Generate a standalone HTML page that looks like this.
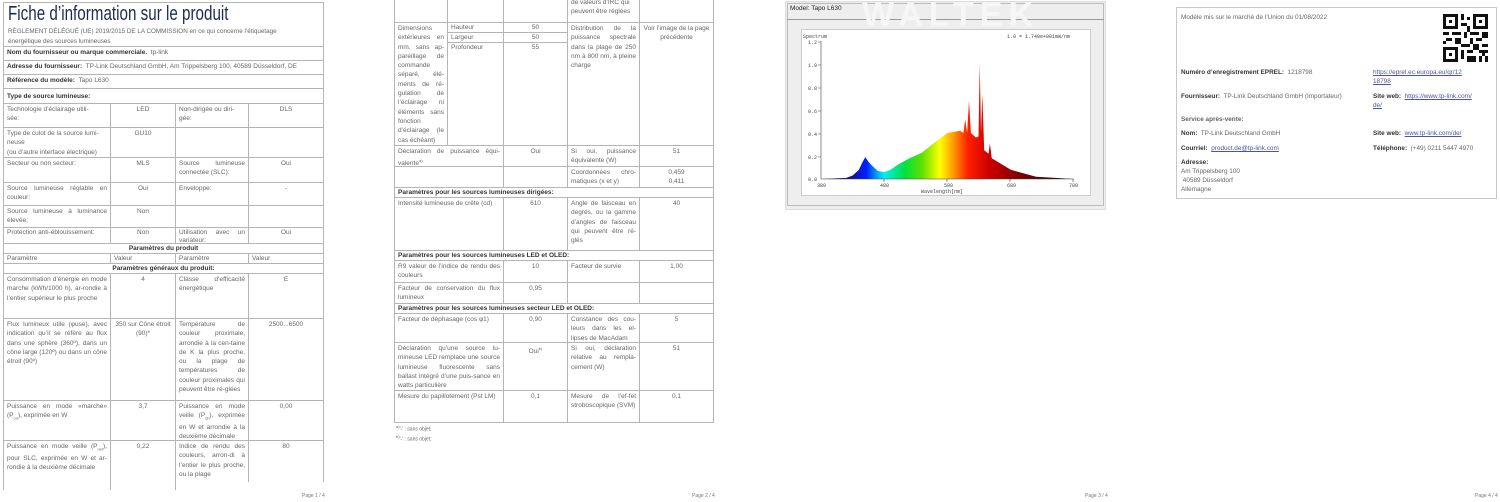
<!DOCTYPE html>
<html><head><meta charset="utf-8"><style>
body{margin:0;width:1500px;height:502px;background:#fff;position:relative;overflow:hidden;font-family:"Liberation Sans",sans-serif;color:#555}
.c{position:absolute;border:1px solid #b5b5b5;box-sizing:border-box;padding:1px 3px;font-size:6.5px;line-height:9.3px;color:#666;overflow:hidden}
.b{font-weight:bold;color:#333}
.ct{text-align:center}
.j{text-align:justify}
.t{position:absolute;font-size:6.4px;line-height:9px;color:#666;white-space:nowrap}
.pg{position:absolute;top:493px;font-size:5px;color:#777}
a{color:#4a55a2;text-decoration:underline}
</style></head><body>

<!-- PAGE 1 -->
<div class="c" style="left:3px;top:2px;width:321px;height:45px;padding:0 4px">
<div style="font-size:20px;line-height:22px;color:#1d2a55;margin-top:0;transform:scaleX(0.76);transform-origin:0 0;white-space:nowrap">Fiche d’information sur le produit</div>
<div style="font-size:6.3px;line-height:9.5px;color:#666;margin-top:2px;padding-right:20px">RÈGLEMENT DÉLÉGUÉ (UE) 2019/2015 DE LA COMMISSION en ce qui concerne l’étiquetage énergétique des sources lumineuses</div></div>
<div class="c" style="left:3px;top:46px;width:321px;height:15px"><span class="b">Nom du fournisseur ou marque commerciale.</span>&nbsp; tp-link</div>
<div class="c" style="left:3px;top:60px;width:321px;height:15px"><span class="b">Adresse du fournisseur:</span>&nbsp; TP-Link Deutschland GmbH, Am Trippelsberg 100, 40589 Düsseldorf, DE</div>
<div class="c" style="left:3px;top:74px;width:321px;height:15px"><span class="b">Référence du modèle:</span>&nbsp; Tapo L630</div>
<div class="c" style="left:3px;top:88px;width:321px;height:16px;padding-top:3px"><span class="b">Type de source lumineuse:</span></div>

<div class="c j" style="left:3px;top:103px;width:108px;height:25px">Technologie d’éclairage utili-<br>sée:</div>
<div class="c ct" style="left:110px;top:103px;width:66px;height:25px">LED</div>
<div class="c j" style="left:175px;top:103px;width:74px;height:25px">Non-dirigée ou diri-<br>gée:</div>
<div class="c ct" style="left:248px;top:103px;width:76px;height:25px">DLS</div>

<div class="c" style="left:3px;top:127px;width:108px;height:31px">Type de culot de la source lumi-<br>neuse<br>(ou d’autre interface électrique)</div>
<div class="c ct" style="left:110px;top:127px;width:66px;height:31px">GU10</div>
<div class="c" style="left:175px;top:127px;width:74px;height:31px"></div>
<div class="c" style="left:248px;top:127px;width:76px;height:31px"></div>

<div class="c" style="left:3px;top:157px;width:108px;height:26px">Secteur ou non secteur:</div>
<div class="c ct" style="left:110px;top:157px;width:66px;height:26px">MLS</div>
<div class="c j" style="left:175px;top:157px;width:74px;height:26px">Source lumineuse connectée (SLC):</div>
<div class="c ct" style="left:248px;top:157px;width:76px;height:26px">Oui</div>

<div class="c j" style="left:3px;top:182px;width:108px;height:24px">Source lumineuse réglable en couleur:</div>
<div class="c ct" style="left:110px;top:182px;width:66px;height:24px">Oui</div>
<div class="c" style="left:175px;top:182px;width:74px;height:24px">Enveloppe:</div>
<div class="c ct" style="left:248px;top:182px;width:76px;height:24px">-</div>

<div class="c j" style="left:3px;top:205px;width:108px;height:23px">Source lumineuse à luminance élevée:</div>
<div class="c ct" style="left:110px;top:205px;width:66px;height:23px">Non</div>
<div class="c" style="left:175px;top:205px;width:74px;height:23px"></div>
<div class="c" style="left:248px;top:205px;width:76px;height:23px"></div>

<div class="c" style="left:3px;top:227px;width:108px;height:17px;line-height:7.5px">Protection anti-éblouissement:</div>
<div class="c ct" style="left:110px;top:227px;width:66px;height:17px;line-height:7.5px">Non</div>
<div class="c j" style="left:175px;top:227px;width:74px;height:17px;line-height:7.5px">Utilisation avec un variateur:</div>
<div class="c ct" style="left:248px;top:227px;width:76px;height:17px;line-height:7.5px">Oui</div>

<div class="c ct b" style="left:3px;top:243px;width:321px;height:11px;padding-top:0">Paramètres du produit</div>
<div class="c" style="left:3px;top:253px;width:108px;height:11px;padding-top:0">Paramètre</div>
<div class="c" style="left:110px;top:253px;width:66px;height:11px;padding-top:0">Valeur</div>
<div class="c" style="left:175px;top:253px;width:74px;height:11px;padding-top:0">Paramètre</div>
<div class="c" style="left:248px;top:253px;width:76px;height:11px;padding-top:0">Valeur</div>
<div class="c ct b" style="left:3px;top:263px;width:321px;height:11px;padding-top:0">Paramètres généraux du produit:</div>

<div class="c j" style="left:3px;top:273px;width:108px;height:46px">Consommation d’énergie en mode marche (kWh/1000 h), ar-rondie à l’entier supérieur le plus proche</div>
<div class="c ct" style="left:110px;top:273px;width:66px;height:46px">4</div>
<div class="c j" style="left:175px;top:273px;width:74px;height:46px">Classe d’efficacité énergétique</div>
<div class="c ct" style="left:248px;top:273px;width:76px;height:46px">E</div>

<div class="c j" style="left:3px;top:318px;width:108px;height:83px">Flux lumineux utile (φuse), avec indication qu’il se réfère au flux dans une sphère (360º), dans un cône large (120º) ou dans un cône étroit (90º)</div>
<div class="c ct" style="left:110px;top:318px;width:66px;height:83px">350 sur Cône étroit (90)*</div>
<div class="c j" style="left:175px;top:318px;width:74px;height:83px">Température de couleur proximale, arrondie à la cen-taine de K la plus proche, ou la plage de températures de couleur proximales qui peuvent être ré-glées</div>
<div class="c ct" style="left:248px;top:318px;width:76px;height:83px">2500...6500</div>

<div class="c j" style="left:3px;top:400px;width:108px;height:41px">Puissance en mode «marche» (P<sub style="font-size:4px">on</sub>), exprimée en W</div>
<div class="c ct" style="left:110px;top:400px;width:66px;height:41px">3,7</div>
<div class="c j" style="left:175px;top:400px;width:74px;height:41px">Puissance en mode veille (P<sub style="font-size:4px">sb</sub>), exprimée en W et arrondie à la deuxième décimale</div>
<div class="c ct" style="left:248px;top:400px;width:76px;height:41px">0,00</div>

<div class="c j" style="left:3px;top:440px;width:108px;height:50px;border-bottom:none">Puissance en mode veille (P<sub style="font-size:4px">net</sub>), pour SLC, exprimée en W et ar-rondie à la deuxième décimale</div>
<div class="c ct" style="left:110px;top:440px;width:66px;height:50px;border-bottom:none">0,22</div>
<div class="c j" style="left:175px;top:440px;width:74px;height:42px;border-bottom:none">Indice de rendu des couleurs, arron-di à l’entier le plus proche, ou la plage</div>
<div class="c ct" style="left:248px;top:440px;width:76px;height:42px;border-bottom:none">80</div>
<div class="pg" style="left:302px">Page 1 / 4</div>

<!-- PAGE 2 -->
<div class="c" style="left:394px;top:-2px;width:54px;height:25px;border-right:none"></div>
<div class="c" style="left:447px;top:-2px;width:57px;height:25px"></div>
<div class="c" style="left:503px;top:-2px;width:65px;height:25px"></div>
<div class="c" style="left:567px;top:-4px;width:73px;height:27px">de valeurs d’IRC qui peuvent être réglées</div>
<div class="c" style="left:639px;top:-2px;width:75px;height:25px"></div>

<div class="c j" style="left:394px;top:22px;width:54px;height:124px">Dimensions extérieures en mm, sans ap-pareillage de commande séparé, élé-ments de ré-gulation de l’éclairage ni éléments sans fonction d’éclairage (le cas échéant)</div>
<div class="c" style="left:447px;top:22px;width:57px;height:11px;padding-top:0">Hauteur</div>
<div class="c ct" style="left:503px;top:22px;width:65px;height:11px;padding-top:0">50</div>
<div class="c" style="left:447px;top:32px;width:57px;height:11px;padding-top:0">Largeur</div>
<div class="c ct" style="left:503px;top:32px;width:65px;height:11px;padding-top:0">50</div>
<div class="c" style="left:447px;top:42px;width:57px;height:104px;padding-top:0">Profondeur</div>
<div class="c ct" style="left:503px;top:42px;width:65px;height:104px;padding-top:0">55</div>
<div class="c j" style="left:567px;top:22px;width:73px;height:124px">Distribution de la puissance spectrale dans la plage de 250 nm à 800 nm, à pleine charge</div>
<div class="c ct" style="left:639px;top:22px;width:75px;height:124px">Voir l’image de la page précédente</div>

<div class="c j" style="left:394px;top:145px;width:110px;height:22px">Déclaration de puissance équi-valente<sup style="font-size:4px">a)</sup></div>
<div class="c ct" style="left:503px;top:145px;width:65px;height:22px">Oui</div>
<div class="c j" style="left:567px;top:145px;width:73px;height:22px">Si oui, puissance équivalente (W)</div>
<div class="c ct" style="left:639px;top:145px;width:75px;height:22px">51</div>

<div class="c" style="left:394px;top:166px;width:110px;height:22px"></div>
<div class="c" style="left:503px;top:166px;width:65px;height:22px"></div>
<div class="c j" style="left:567px;top:166px;width:73px;height:22px">Coordonnées chro-matiques (x et y)</div>
<div class="c ct" style="left:639px;top:166px;width:75px;height:22px">0,459<br>0,411</div>

<div class="c b" style="left:394px;top:187px;width:320px;height:11px;padding-top:0">Paramètres pour les sources lumineuses dirigées:</div>
<div class="c j" style="left:394px;top:197px;width:110px;height:54px">Intensité lumineuse de crête (cd)</div>
<div class="c ct" style="left:503px;top:197px;width:65px;height:54px">610</div>
<div class="c j" style="left:567px;top:197px;width:73px;height:54px">Angle de faisceau en degrés, ou la gamme d’angles de faisceau qui peuvent être ré-glés</div>
<div class="c ct" style="left:639px;top:197px;width:75px;height:54px">40</div>

<div class="c b" style="left:394px;top:250px;width:320px;height:11px;padding-top:0">Paramètres pour les sources lumineuses LED et OLED:</div>
<div class="c j" style="left:394px;top:260px;width:110px;height:23px">R9 valeur de l’indice de rendu des couleurs</div>
<div class="c ct" style="left:503px;top:260px;width:65px;height:23px">10</div>
<div class="c" style="left:567px;top:260px;width:73px;height:23px">Facteur de survie</div>
<div class="c ct" style="left:639px;top:260px;width:75px;height:23px">1,00</div>
<div class="c j" style="left:394px;top:282px;width:110px;height:22px">Facteur de conservation du flux lumineux</div>
<div class="c ct" style="left:503px;top:282px;width:65px;height:22px">0,95</div>
<div class="c" style="left:567px;top:282px;width:73px;height:22px"></div>
<div class="c" style="left:639px;top:282px;width:75px;height:22px"></div>

<div class="c b" style="left:394px;top:303px;width:320px;height:11px;padding-top:0">Paramètres pour les sources lumineuses secteur LED et OLED:</div>
<div class="c" style="left:394px;top:313px;width:110px;height:30px">Facteur de déphasage (cos φ1)</div>
<div class="c ct" style="left:503px;top:313px;width:65px;height:30px">0,90</div>
<div class="c j" style="left:567px;top:313px;width:73px;height:30px">Constance des cou-leurs dans les el-lipses de MacAdam</div>
<div class="c ct" style="left:639px;top:313px;width:75px;height:30px">5</div>
<div class="c j" style="left:394px;top:342px;width:110px;height:49px">Déclaration qu’une source lu-mineuse LED remplace une source lumineuse fluorescente sans ballast intégré d’une puis-sance en watts particulière</div>
<div class="c ct" style="left:503px;top:342px;width:65px;height:49px">Oui<sup style="font-size:4px">b)</sup></div>
<div class="c j" style="left:567px;top:342px;width:73px;height:49px">Si oui, déclaration relative au rempla-cement (W)</div>
<div class="c ct" style="left:639px;top:342px;width:75px;height:49px">51</div>
<div class="c j" style="left:394px;top:390px;width:110px;height:33px">Mesure du papillotement (Pst LM)</div>
<div class="c ct" style="left:503px;top:390px;width:65px;height:33px">0,1</div>
<div class="c j" style="left:567px;top:390px;width:73px;height:33px">Mesure de l’ef-fet stroboscopique (SVM)</div>
<div class="c ct" style="left:639px;top:390px;width:75px;height:33px">0,1</div>
<div class="t" style="left:396px;top:422px;font-size:5px"><sup style="font-size:4px">a)</sup>'-' : sans objet;</div>
<div class="t" style="left:396px;top:432px;font-size:5px"><sup style="font-size:4px">b)</sup>'-' : sans objet;</div>
<div class="pg" style="left:692px">Page 2 / 4</div>

<!-- PAGE 3 -->
<div style="position:absolute;left:785px;top:1px;width:321px;height:209px;background:#eeeeee;border:1px solid #ddd;box-sizing:border-box"></div>
<div style="position:absolute;left:787px;top:3px;width:317px;height:203px;border:1px solid #bbb;box-sizing:border-box"></div>
<div style="position:absolute;left:787px;top:19px;width:317px;height:1px;background:#999"></div>
<div style="position:absolute;left:790px;top:5px;font-size:6.5px;color:#222">Model: Tapo L630</div>
<div style="position:absolute;left:862px;top:-4px;font-size:34px;font-weight:bold;color:#f6f6f6;letter-spacing:6px">WALTEK</div>
<div style="position:absolute;left:801px;top:29px;width:290px;height:167px;background:#fff;border:1px solid #ccc;box-sizing:border-box"></div>
<svg style="position:absolute;left:0;top:0" width="1500" height="502">
<defs><linearGradient id="g" gradientUnits="userSpaceOnUse" x1="0" y1="0" x2="400" y2="0">
<stop offset="0" stop-color="#300060"/><stop offset="0.12" stop-color="#1010a0"/><stop offset="0.18" stop-color="#0020ff"/><stop offset="0.22" stop-color="#00a0ff"/><stop offset="0.25" stop-color="#00f0f0"/><stop offset="0.33" stop-color="#00e040"/><stop offset="0.4" stop-color="#60e000"/><stop offset="0.47" stop-color="#ffff00"/><stop offset="0.52" stop-color="#ffa000"/><stop offset="0.58" stop-color="#ff2000"/><stop offset="0.66" stop-color="#d00000"/><stop offset="0.78" stop-color="#800000"/><stop offset="1" stop-color="#200000"/></linearGradient></defs>
<g transform="translate(821,179) scale(0.6325,-115)">
<path fill="url(#g)" d="M0 0 L40 0.01 L50 0.03 L60 0.08 L65 0.14 L70 0.19 L75 0.15 L80 0.12 L90 0.07 L100 0.06 L110 0.08 L120 0.12 L140 0.18 L160 0.23 L180 0.32 L200 0.40 L220 0.42 L225 0.40 L228 0.52 L231 0.40 L234 0.68 L237 0.40 L245 0.36 L249 0.37 L251 1.0 L253 0.40 L255 0.74 L258 0.25 L265 0.22 L267 0.31 L270 0.18 L300 0.08 L340 0.02 L400 0 Z"/></g>
<g stroke="#444" stroke-width="0.6" fill="none"><path d="M821 41V179H1074M818 42h3M818 65h3M818 88h3M818 111h3M818 134h3M818 157h3M884 179v3M947 179v3M1010 179v3M1073 179v3"/></g>
<g font-family="Liberation Mono,monospace" font-size="5" fill="#444">
<text x="803" y="38">Spectrum</text><text x="808" y="44">1.2</text><text x="808" y="67">1.0</text><text x="808" y="90">0.8</text><text x="808" y="113">0.6</text><text x="808" y="136">0.4</text><text x="808" y="159">0.2</text><text x="808" y="181">0.0</text>
<text x="817" y="187">380</text><text x="880" y="187">480</text><text x="944" y="187">580</text><text x="1007" y="187">680</text><text x="1069" y="187">780</text>
<text x="921" y="193">Wavelength[nm]</text><text x="1007" y="38">1.0 = 1.740e+001mW/nm</text></g>
</svg>
<div class="pg" style="left:1085px">Page 3 / 4</div>

<!-- PAGE 4 -->
<div style="position:absolute;left:1176px;top:7px;width:321px;height:192px;border:1px solid #c8c8c8;box-sizing:border-box"></div>
<div class="t" style="left:1181px;top:13px">Modèle mis sur le marché de l’Union du 01/08/2022</div>
<svg style="position:absolute;left:1443px;top:14px" width="45" height="48" viewBox="0 0 15 16">
<g fill="#111"><path d="M0 0h5v5h-5zM10 0h5v5h-5zM0 11h5v5h-5z"/></g>
<g fill="#fff"><path d="M1 1h3v3h-3zM11 1h3v3h-3zM1 12h3v3h-3z"/></g>
<g fill="#111"><path d="M2 2h1v1h-1zM12 2h1v1h-1zM2 13h1v1h-1zM6 0h1v2h-1zM8 1h1v1h-1zM6 3h2v1h-2zM8 4h1v2h-1zM0 6h2v1h-2zM3 6h3v1h-3zM7 6h1v2h-1zM9 6h3v1h-3zM13 6h2v2h-2zM1 8h2v1h-2zM4 8h2v2h-2zM9 8h1v2h-1zM11 8h2v1h-2zM0 9h1v1h-1zM6 10h3v1h-3zM10 10h2v2h-2zM13 10h2v1h-2zM6 12h1v3h-1zM8 12h2v1h-2zM12 12h3v1h-3zM8 14h3v2h-3zM12 14h1v2h-1zM14 14h1v2h-1zM13 13h1v1h-1z"/></g></svg>
<div class="t" style="left:1181px;top:68px"><span class="b">Numéro d’enregistrement EPREL:</span>&nbsp; 1218798</div>
<div class="t" style="left:1373px;top:68px"><a>https://eprel.ec.europa.eu/qr/12</a><br><a>18798</a></div>
<div class="t" style="left:1181px;top:92px"><span class="b">Fournisseur:</span>&nbsp; TP-Link Deutschland GmbH (Importateur)</div>
<div class="t" style="left:1373px;top:92px"><span class="b">Site web:</span>&nbsp; <a>https://www.tp-link.com/</a><br><a>de/</a></div>
<div class="t b" style="left:1181px;top:115px">Service après-vente:</div>
<div class="t" style="left:1181px;top:129px"><span class="b">Nom:</span>&nbsp; TP-Link Deutschland GmbH</div>
<div class="t" style="left:1373px;top:129px"><span class="b">Site web:</span>&nbsp; <a>www.tp-link.com/de/</a></div>
<div class="t" style="left:1181px;top:144px"><span class="b">Courriel:</span>&nbsp; <a>product.de@tp-link.com</a></div>
<div class="t" style="left:1373px;top:144px"><span class="b">Téléphone:</span>&nbsp; (+49) 0211 5447 4970</div>
<div class="t" style="left:1181px;top:158px"><span class="b">Adresse:</span><br>Am Trippelsberg 100<br>&nbsp;40589 Düsseldorf<br>Allemagne</div>
<div class="pg" style="left:1475px">Page 4 / 4</div>
</body></html>
